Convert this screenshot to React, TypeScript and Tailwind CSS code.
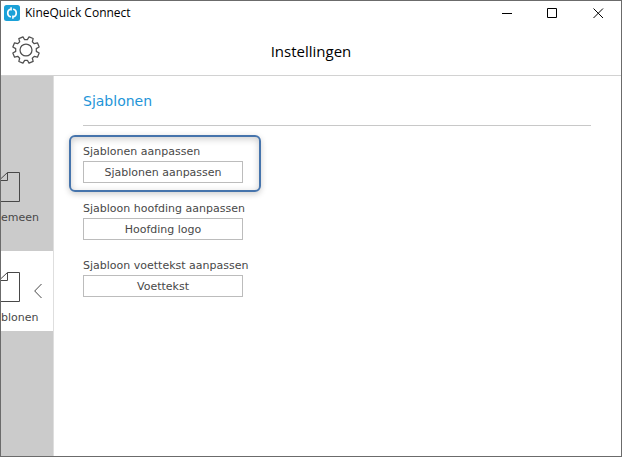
import React from 'react'

type TemplateFieldProps = {
    id: string
    label: string
    action: string
}

type SidebarItemProps = {
    label: string
    active?: boolean
}

const AppLogo: React.FC = () => (
    <svg className="size-4" viewBox="0 0 16 16" fill="none">
        <rect width="16" height="16" rx="2.5" fill="#1ba1d8" />
        <path d="M6.800 4L4.800 5.100C3.400 6.600 3.400 9.400 4.800 10.900L6.800 12.100M9.200 4L11.200 5.100C12.600 6.600 12.600 9.400 11.200 10.900L9.200 12.100" stroke="#fff" strokeWidth="1.700" />
        <path d="M7.100 2.200V5.400M8.900 10.600V13.800" stroke="#fff" strokeWidth="1.500" />
    </svg>
)

const GearIcon: React.FC = () => (
    <svg className="size-7" viewBox="-14.5 -14 29 28" fill="none" stroke="#505050" strokeWidth="1.3" strokeLinejoin="round">
        <circle r="6.2" />
        <path
            transform="rotate(22.5)"
            d="M-2.3 -13.8H2.3L2.8 -10.4L5.4 -9.3L8.1 -11.4L11.4 -8.1L9.3 -5.4L10.4 -2.8L13.8 -2.3V2.3L10.4 2.8L9.3 5.4L11.4 8.1L8.1 11.4L5.4 9.3L2.8 10.4L2.3 13.8H-2.3L-2.8 10.4L-5.4 9.3L-8.1 11.4L-11.4 8.1L-9.3 5.4L-10.4 2.8L-13.8 2.3V-2.3L-10.4 -2.8L-9.3 -5.4L-11.4 -8.1L-8.1 -11.4L-5.4 -9.3L-2.8 -10.4Z"
        />
    </svg>
)

const SidebarItem: React.FC<SidebarItemProps> = ({ label, active }) => (
    <button
        type="button"
        className={`flex h-20 w-full flex-col justify-end pb-[5px] text-[11px] leading-4 text-[#484848] ${active ? 'bg-white' : ''}`}
    >
        <span className="flex w-full items-center justify-between pr-[11px]">
            <svg className="h-[30px] w-5" viewBox="0 0 20 30" fill="none" stroke="#484848">
                <path d="M-1 7.500L6.500 .5H18.500V29.500H-1M6.500 .5V8.500H-1" />
            </svg>
            {active && (
                <svg className="mt-2 h-4 w-2" viewBox="0 0 8 16" fill="none" stroke="#484848">
                    <path d="M7.500 1L.7 8L7.500 15" />
                </svg>
            )}
        </span>
        <span className="mt-2 w-full pr-[17px] text-right">{label}</span>
    </button>
)

const TemplateField: React.FC<TemplateFieldProps> = ({ id, label, action }) => (
    <div className="flex flex-col items-start gap-px">
        <label htmlFor={id} className="whitespace-nowrap leading-4">{label}</label>
        <button id={id} type="button" className="h-[22px] w-40 border border-[#bcbcbc] bg-white pt-0.5 text-center leading-4">
            {action}
        </button>
    </div>
)

const App: React.FC = () => {
    return (
        <div className="flex min-h-screen flex-col border border-[#6b6b6b] bg-white font-['DejaVu_Sans',sans-serif]">
            <div className="flex h-6 items-center justify-between pl-[3px]">
                <div className="flex items-center gap-[5px]">
                    <AppLogo />
                    <span className="font-['Open_Sans',sans-serif] text-xs text-black">KineQuick Connect</span>
                </div>
                <div className="flex text-black">
                    <button type="button" aria-label="Minimaliseren" className="flex h-6 w-[46px] items-center justify-center">
                        <svg className="size-[11px]" viewBox="0 0 11 11" stroke="currentColor"><path d="M1 5.500H11" /></svg>
                    </button>
                    <button type="button" aria-label="Maximaliseren" className="flex h-6 w-[46px] items-center justify-center">
                        <svg className="size-[11px]" viewBox="0 0 11 11" fill="none" stroke="currentColor"><path d="M.5 .5H9.500V9.500H.5Z" /></svg>
                    </button>
                    <button type="button" aria-label="Sluiten" className="flex h-6 w-[46px] items-center justify-center">
                        <svg className="size-[11px]" viewBox="0 0 11 11" stroke="currentColor"><path d="M.5 .5L10 10M10 .5L.5 10" /></svg>
                    </button>
                </div>
            </div>

            <header className="grid h-[51px] grid-cols-[1fr_auto_1fr] items-center border-b border-[#d2d2d2] px-[11px]">
                <button type="button" aria-label="Instellingen" className="justify-self-start">
                    <GearIcon />
                </button>
                <h1 className="pt-0.5 font-['Open_Sans',sans-serif] text-[15px] leading-5 text-black">Instellingen</h1>
            </header>

            <div className="flex flex-1">
                <nav className="flex w-[53px] shrink-0 flex-col gap-5 overflow-hidden border-r border-[#dedede] bg-[#cbcbcb] pt-[75px]">
                    <SidebarItem label="emeen" />
                    <SidebarItem label="blonen" active />
                </nav>

                <main className="flex-1 pt-[15px] pr-[30px] pl-[29px] text-[11px] text-[#484848]">
                    <h2 className="border-b border-[#c8c8c8] pb-3.5 text-sm leading-5 text-[#1e95d8]">Sjablonen</h2>
                    <div className="mt-[9px] -ml-3.5 w-48 rounded-md border-2 border-[#4674ac] pt-[7px] pb-[7px] pl-3 shadow-[0_2px_6px_rgba(0,0,0,0.2),inset_0_2px_7px_rgba(0,0,0,0.2)]">
                        <TemplateField id="edit-templates" label="Sjablonen aanpassen" action="Sjablonen aanpassen" />
                    </div>
                    <div className="mt-[9px] flex flex-col gap-[18px]">
                        <TemplateField id="edit-header" label="Sjabloon hoofding aanpassen" action="Hoofding logo" />
                        <TemplateField id="edit-footer" label="Sjabloon voettekst aanpassen" action="Voettekst" />
                    </div>
                </main>
            </div>
        </div>
    )
}

export default App
